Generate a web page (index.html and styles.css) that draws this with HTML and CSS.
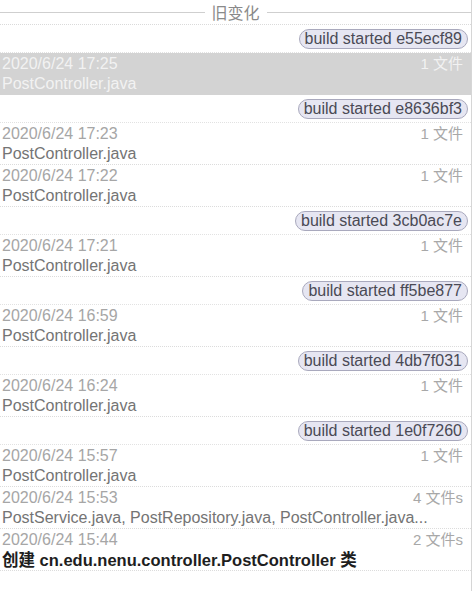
FILE: index.html
```html
<!DOCTYPE html>
<html lang="zh">
<head>
<meta charset="utf-8">
<title>旧变化</title>
<link rel="stylesheet" href="styles.css">
</head>
<body>
<div class="panel">
  <div class="header"><span class="header-line"></span><span class="header-title">旧变化</span><span class="header-line"></span></div>

  <div class="badge-row"><span class="badge">build started e55ecf89</span></div>
  <div class="entry selected">
    <div class="entry-top"><span class="date">2020/6/24 17:25</span><span class="count">1 文件</span></div>
    <div class="name">PostController.java</div>
  </div>

  <div class="badge-row"><span class="badge">build started e8636bf3</span></div>
  <div class="entry">
    <div class="entry-top"><span class="date">2020/6/24 17:23</span><span class="count">1 文件</span></div>
    <div class="name">PostController.java</div>
  </div>
  <div class="entry">
    <div class="entry-top"><span class="date">2020/6/24 17:22</span><span class="count">1 文件</span></div>
    <div class="name">PostController.java</div>
  </div>

  <div class="badge-row"><span class="badge">build started 3cb0ac7e</span></div>
  <div class="entry">
    <div class="entry-top"><span class="date">2020/6/24 17:21</span><span class="count">1 文件</span></div>
    <div class="name">PostController.java</div>
  </div>

  <div class="badge-row"><span class="badge">build started ff5be877</span></div>
  <div class="entry">
    <div class="entry-top"><span class="date">2020/6/24 16:59</span><span class="count">1 文件</span></div>
    <div class="name">PostController.java</div>
  </div>

  <div class="badge-row"><span class="badge">build started 4db7f031</span></div>
  <div class="entry">
    <div class="entry-top"><span class="date">2020/6/24 16:24</span><span class="count">1 文件</span></div>
    <div class="name">PostController.java</div>
  </div>

  <div class="badge-row"><span class="badge">build started 1e0f7260</span></div>
  <div class="entry">
    <div class="entry-top"><span class="date">2020/6/24 15:57</span><span class="count">1 文件</span></div>
    <div class="name">PostController.java</div>
  </div>
  <div class="entry">
    <div class="entry-top"><span class="date">2020/6/24 15:53</span><span class="count">4 文件s</span></div>
    <div class="name">PostService.java, PostRepository.java, PostController.java...</div>
  </div>
  <div class="entry">
    <div class="entry-top"><span class="date">2020/6/24 15:44</span><span class="count">2 文件s</span></div>
    <div class="name message">创建 cn.edu.nenu.controller.PostController 类</div>
  </div>
</div>
</body>
</html>
```
FILE: styles.css
```css
html, body {
  margin: 0;
  padding: 0;
  background: #ffffff;
}

body {
  font-family: "Liberation Sans", "Noto Sans CJK SC", sans-serif;
  font-size: 16px;
}

.panel {
  width: 471px;
  min-height: 591px;
  border-right: 1px solid #d6d6d6;
}

.header {
  display: flex;
  align-items: center;
  height: 25px;
  border-bottom: 1px dotted #dadada;
  gap: 7px;
  box-sizing: border-box;
}

.header-line {
  flex: 1;
  height: 1px;
  background: #cfcfcf;
  margin-top: 1px;
}

.header-title {
  font-family: "Noto Sans CJK SC", sans-serif;
  font-size: 16px;
  color: #8a8a8a;
  line-height: 20px;
}

.badge-row {
  display: flex;
  justify-content: flex-end;
  height: 28px;
  align-items: center;
  padding-right: 3px;
  border-bottom: 1px dotted #e2e2e2;
  box-sizing: border-box;
}

.badge {
  display: inline-block;
  height: 20px;
  line-height: 18px;
  padding: 0 5px;
  border: 1px solid #a9a9bd;
  border-radius: 10px;
  background: #e6e6f2;
  color: #4a4a55;
  font-size: 16px;
  box-sizing: border-box;
}

.entry {
  height: 42px;
  padding: 1px 0 0 2px;
  box-sizing: border-box;
  border-bottom: 1px dotted #dcdcdc;
}

.entry-top {
  display: flex;
  justify-content: space-between;
  height: 20px;
  line-height: 20px;
}

.date {
  color: #a6a6a6;
}

.count {
  color: #a8a8a8;
  padding-right: 8px;
  font-size: 15px;
}

.name {
  color: #747474;
  line-height: 20px;
  white-space: nowrap;
  overflow: hidden;
}

.name.message {
  color: #1e1e1e;
  font-weight: bold;
  font-size: 16.5px;
}

.entry.selected {
  background: #d3d3d3;
  border-bottom-color: #d3d3d3;
}

.entry.selected .date,
.entry.selected .count,
.entry.selected .name {
  color: #f2f2f2;
}
```
